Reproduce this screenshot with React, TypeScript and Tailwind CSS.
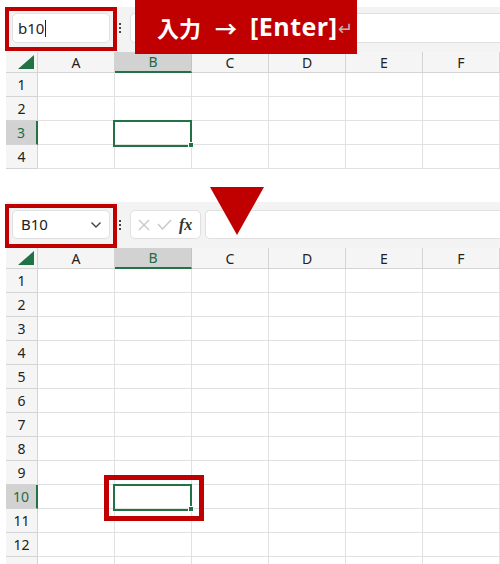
import React from "react";

const COLS = ["A", "B", "C", "D", "E", "F"];
const FONT = { fontFamily: '"Noto Sans", "Open Sans", sans-serif' };

function Corner() {
  return (
    <div className="w-[32px] h-full bg-[#f5f5f5] border-r border-b border-[#d4d4d4] flex items-end justify-end pr-[3px] pb-[3px]">
      <svg width="16" height="14" viewBox="0 0 16 14">
        <polygon points="16,0 16,14 0,14" fill="#217346" />
      </svg>
    </div>
  );
}

function HeaderRow() {
  return (
    <div className="flex h-[21px]">
      <Corner />
      {COLS.map((c) => {
        const sel = c === "B";
        return (
          <div
            key={c}
            className={
              sel
                ? "w-[77px] h-full bg-[#d2d2d2] border-r border-[#c4c4c4] border-b-2 border-b-[#217346] flex items-center justify-center text-[14px] text-[#1e6b47]"
                : "w-[77px] h-full bg-[#f5f5f5] border-r border-b border-[#d4d4d4] flex items-center justify-center text-[14px] text-[#222]"
            }
          >
            {c}
          </div>
        );
      })}
    </div>
  );
}

function Row({ n, selRow, highlight, hideLabel }: { n: number; selRow: boolean; highlight?: boolean; hideLabel?: boolean }) {
  return (
    <div className="flex h-[24px]">
      <div
        className={
          selRow
            ? "w-[32px] h-full bg-[#d2d2d2] border-r-2 border-r-[#217346] border-b border-[#d4d4d4] flex items-center justify-center text-[14px] text-[#1e6b47]"
            : "w-[32px] h-full bg-[#f5f5f5] border-r border-b border-[#d4d4d4] flex items-center justify-center text-[14px] text-[#222]"
        }
      >
        {hideLabel ? "" : n}
      </div>
      {COLS.map((c) => (
        <div key={c} className="relative w-[77px] h-full border-r border-b border-[#e1e1e1]">
          {selRow && c === "B" && (
            <>
              <div className="absolute left-[-2px] top-[-1px] w-[79px] h-[27px] border-2 border-[#217346] z-10" />
              <div className="absolute left-[73px] top-[21px] w-[6px] h-[6px] bg-[#217346] border border-white z-20" />
              {highlight && (
                <div className="absolute left-[-11px] top-[-10px] w-[100px] h-[46px] border-[5px] border-[#c00000] z-30" />
              )}
            </>
          )}
        </div>
      ))}
    </div>
  );
}

function Chevron() {
  return (
    <svg width="12" height="8" viewBox="0 0 12 8">
      <polyline points="1.5,1.5 6,6 10.5,1.5" fill="none" stroke="#444" strokeWidth="1.4" />
    </svg>
  );
}

function Dots() {
  return (
    <div className="w-[20px] h-[30px] flex flex-col items-center justify-center gap-[2px]">
      <div className="w-[2px] h-[2px] bg-[#444]" />
      <div className="w-[2px] h-[2px] bg-[#444]" />
      <div className="w-[2px] h-[2px] bg-[#444]" />
    </div>
  );
}

function TopSection() {
  return (
    <div className="relative h-[169px] overflow-hidden">
      <div className="ml-[6px] w-[494px]">
        <div className="h-[7px] bg-white" />
        <div className="h-[45px] bg-[#f3f3f3] flex items-start pt-[6px] pl-[6px]">
          <div className="w-[98px] h-[30px] rounded-[5px] bg-white border border-[#e0e0e0] flex items-center pl-[5px] text-[15px] text-[#222]">
            <span>b10</span>
            <span className="inline-block w-[1px] h-[17px] bg-[#222] ml-[1px]" />
          </div>
          <Dots />
          <div className="flex-1 h-[30px] rounded-l-[5px] bg-white border border-r-0 border-[#e0e0e0]" />
        </div>
        <HeaderRow />
        {[1, 2, 3, 4].map((n) => (
          <Row key={n} n={n} selRow={n === 3} />
        ))}
      </div>
      <div className="absolute left-[5px] top-[7px] w-[112px] h-[44px] border-[4px] border-[#c00000]" />
      <div
        className="absolute left-[135px] top-0 w-[222px] h-[54px] bg-[#c00000] flex items-center pl-[22px] text-white font-bold text-[22px]"
        style={{ fontFamily: '"Noto Sans CJK JP", "Noto Sans", sans-serif' }}
      >
        <span>入力</span>
        <span className="ml-[14px]">→</span>
        <span className="ml-[13px] text-[25px] tracking-[0.5px]" style={{ fontFamily: '"Open Sans", "Noto Sans", sans-serif' }}>
          [Enter]
        </span>
        <span className="text-[#b8b8b8] font-normal text-[18px]">↵</span>
      </div>
    </div>
  );
}

function BottomSection() {
  return (
    <div className="relative">
      <div className="ml-[6px] w-[494px]">
        <div className="h-[46px] bg-[#f3f3f3] flex items-start pt-[8px] pl-[6px]">
          <div className="w-[98px] h-[29px] rounded-[5px] bg-white border border-[#e0e0e0] flex items-center justify-between pl-[8px] pr-[7px] text-[15px] text-[#222]">
            <span>B10</span>
            <Chevron />
          </div>
          <Dots />
          <div className="w-[71px] h-[29px] rounded-[5px] bg-white border border-[#e0e0e0] flex items-center pl-[6px] gap-[6px]">
            <svg width="14" height="14" viewBox="0 0 14 14">
              <path d="M2 2 L12 12 M12 2 L2 12" stroke="#c8c8c8" strokeWidth="1.4" />
            </svg>
            <svg width="15" height="12" viewBox="0 0 15 12">
              <polyline points="1,5 5.5,10 14,1" fill="none" stroke="#c8c8c8" strokeWidth="1.4" />
            </svg>
            <span
              className="italic font-bold text-[16px] text-[#333] ml-[1px]"
              style={{ fontFamily: '"Liberation Serif", "DejaVu Serif", serif' }}
            >
              fx
            </span>
          </div>
          <div className="flex-1 ml-[4px] h-[29px] rounded-l-[5px] bg-white border border-r-0 border-[#e0e0e0]" />
        </div>
        <HeaderRow />
        {Array.from({ length: 13 }, (_, i) => i + 1).map((n) => (
          <Row key={n} n={n} selRow={n === 10} highlight hideLabel={n === 13} />
        ))}
      </div>
      <div className="absolute left-[5px] top-[2px] w-[112px] h-[44px] border-[4px] border-[#c00000]" />
    </div>
  );
}

export default function App() {
  return (
    <div className="w-[500px] h-[564px] bg-white overflow-hidden relative" style={FONT}>
      <TopSection />
      <div className="h-[33px] relative">
        <svg className="absolute left-[210px] top-[18px] z-40" width="54" height="48" viewBox="0 0 54 48">
          <polygon points="0,0 54,0 27,48" fill="#c00000" />
        </svg>
      </div>
      <BottomSection />
    </div>
  );
}
